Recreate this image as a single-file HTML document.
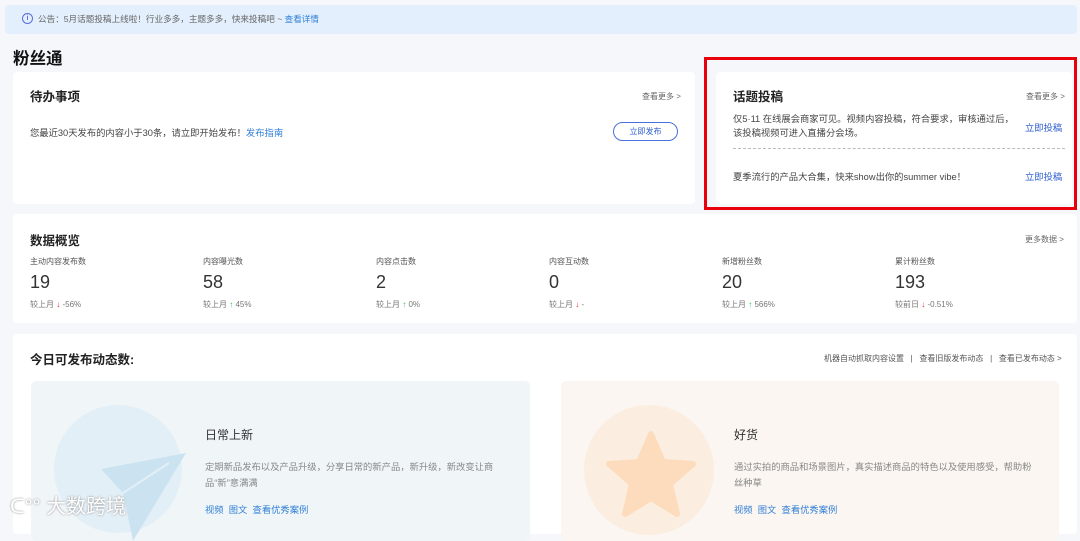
<!DOCTYPE html>
<html><head><meta charset="utf-8"><style>
*{margin:0;padding:0;box-sizing:border-box}
body{width:1080px;height:526px;overflow:hidden;background:#f5f7fa;font-family:"Liberation Sans","Noto Sans CJK SC",sans-serif;color:#333;position:relative}
.abs{position:absolute;white-space:nowrap}
.card{position:absolute;background:#fff;border-radius:4px}
.h{font-size:12.5px;font-weight:bold;color:#222}
.more{font-size:8px;color:#666}
.s{font-size:9.3px;color:#555}
.blue{color:#2f7fd6 !important}
.lbl{font-size:8px;color:#555}
.num{font-size:18px;color:#333}
.cmp{font-size:8px;color:#777}
.dn{color:#e0262f}.up{color:#3fb54a}
.wrap{white-space:normal}
</style></head><body>
<div class="abs" style="left:5px;top:5px;width:1072px;height:29px;background:#e3effc;border-radius:4px"></div>
<div class="abs" style="left:22px;top:13px;width:11px;height:11px;border:1.3px solid #5a6fd8;border-radius:50%;font-size:7px;color:#5a6fd8;text-align:center;line-height:9px;font-weight:bold">i</div>
<div class="abs s" style="left:38px;top:13px;color:#666;font-size:8.6px">公告：5月话题投稿上线啦！行业多多，主题多多，快来投稿吧 ~ <span class="blue">查看详情</span></div>
<div class="abs" style="left:13px;top:45px;font-size:16.5px;font-weight:bold;color:#111">粉丝通</div>

<div class="card" style="left:13px;top:72px;width:682px;height:132px"></div>
<div class="abs h" style="left:30px;top:86px">待办事项</div>
<div class="abs more" style="left:642px;top:91px">查看更多 &gt;</div>
<div class="abs s" style="left:30px;top:125px;color:#444">您最近30天发布的内容小于30条，请立即开始发布！<span class="blue">发布指南</span></div>
<div class="abs" style="left:613px;top:122px;width:65px;height:19px;border:1px solid #4a6fd8;border-radius:10px;font-size:8px;color:#2f5fd0;text-align:center;line-height:17px">立即发布</div>

<div class="card" style="left:716px;top:72px;width:356px;height:132px"></div>
<div class="abs" style="left:704px;top:57px;width:373px;height:153px;border:3px solid #e8000b"></div>
<div class="abs h" style="left:733px;top:86px">话题投稿</div>
<div class="abs more" style="left:1026px;top:91px">查看更多 &gt;</div>
<div class="abs s" style="left:733px;top:112px;line-height:14px;color:#444">仅5·11 在线展会商家可见。视频内容投稿，符合要求，审核通过后，<br>该投稿视频可进入直播分会场。</div>
<div class="abs s" style="left:1025px;top:120px;color:#2f5fd0">立即投稿</div>
<div class="abs" style="left:733px;top:148px;width:332px;border-top:1px dashed #bbb"></div>
<div class="abs s" style="left:733px;top:169px;color:#444">夏季流行的产品大合集，快来show出你的summer vibe！</div>
<div class="abs s" style="left:1025px;top:169px;color:#2f5fd0">立即投稿</div>

<div class="card" style="left:13px;top:214px;width:1064px;height:109px"></div>
<div class="abs h" style="left:30px;top:230px">数据概览</div>
<div class="abs more" style="left:1025px;top:234px">更多数据 &gt;</div>
<div class="abs" style="left:30px;top:256px">
 <div class="abs lbl" style="left:0">主动内容发布数</div><div class="abs num" style="left:0;top:16px">19</div><div class="abs cmp" style="left:0;top:43px">较上月 <span class="dn">↓</span> -56%</div>
 <div class="abs lbl" style="left:173px">内容曝光数</div><div class="abs num" style="left:173px;top:16px">58</div><div class="abs cmp" style="left:173px;top:43px">较上月 <span class="up">↑</span> 45%</div>
 <div class="abs lbl" style="left:346px">内容点击数</div><div class="abs num" style="left:346px;top:16px">2</div><div class="abs cmp" style="left:346px;top:43px">较上月 <span class="up">↑</span> 0%</div>
 <div class="abs lbl" style="left:519px">内容互动数</div><div class="abs num" style="left:519px;top:16px">0</div><div class="abs cmp" style="left:519px;top:43px">较上月 <span class="dn">↓</span> -</div>
 <div class="abs lbl" style="left:692px">新增粉丝数</div><div class="abs num" style="left:692px;top:16px">20</div><div class="abs cmp" style="left:692px;top:43px">较上月 <span class="up">↑</span> 566%</div>
 <div class="abs lbl" style="left:865px">累计粉丝数</div><div class="abs num" style="left:865px;top:16px">193</div><div class="abs cmp" style="left:865px;top:43px">较前日 <span class="dn">↓</span> -0.51%</div>
</div>

<div class="card" style="left:13px;top:334px;width:1064px;height:200px"></div>
<div class="abs h" style="left:30px;top:349px">今日可发布动态数:</div>
<div class="abs more" style="left:824px;top:353px;color:#555">机器自动抓取内容设置 &nbsp;&nbsp;|&nbsp;&nbsp; 查看旧版发布动态 &nbsp;&nbsp;|&nbsp;&nbsp; 查看已发布动态 &gt;</div>

<div class="abs" style="left:31px;top:381px;width:499px;height:160px;background:#f0f5f8;border-radius:5px;overflow:hidden">
 <div class="abs" style="left:23px;top:24px;width:128px;height:128px;border-radius:50%;background:#e3eff6"></div>
 <svg class="abs" style="left:30px;top:50px" width="130" height="110"><path d="M40 38 L125 22 L72 110 L62 62 Z" fill="#cbe3f1"/><path d="M62 62 L108 32" stroke="#e3eff6" stroke-width="2"/></svg>
 <div class="abs" style="left:174px;top:45px;font-size:12px;color:#333">日常上新</div>
 <div class="abs s wrap" style="left:174px;top:78px;color:#888;line-height:16px;width:300px">定期新品发布以及产品升级，分享日常的新产品，新升级，新改变让商品“新”意满满</div>
 <div class="abs s blue" style="left:174px;top:121px">视频 &nbsp;图文 &nbsp;查看优秀案例</div>
</div>
<div class="abs" style="left:561px;top:381px;width:498px;height:160px;background:#fbf6f1;border-radius:5px;overflow:hidden">
 <div class="abs" style="left:23px;top:24px;width:130px;height:130px;border-radius:50%;background:#fbeee0"></div>
 <svg class="abs" style="left:40px;top:45px" width="100" height="100"><path d="M50 8 L62 36 L92 38 L69 58 L76 88 L50 72 L24 88 L31 58 L8 38 L38 36 Z" fill="#fcdcbc" stroke="#fcdcbc" stroke-width="6" stroke-linejoin="round"/></svg>
 <div class="abs" style="left:173px;top:45px;font-size:12px;color:#333">好货</div>
 <div class="abs s wrap" style="left:173px;top:78px;color:#888;line-height:16px;width:300px">通过实拍的商品和场景图片，真实描述商品的特色以及使用感受，帮助粉丝种草</div>
 <div class="abs s blue" style="left:173px;top:121px">视频 &nbsp;图文 &nbsp;查看优秀案例</div>
</div>
<div class="abs" style="left:10px;top:490px;font-size:20px;color:#fff;text-shadow:0 0 2px #888">ᑕ°° 大数跨境</div>
</body></html>
